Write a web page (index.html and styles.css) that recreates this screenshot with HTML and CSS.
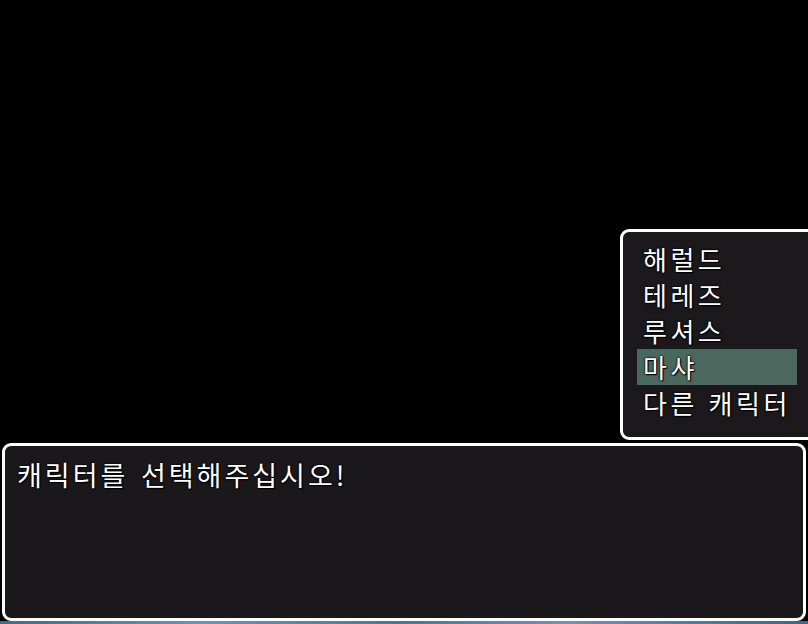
FILE: index.html
```html
<!DOCTYPE html>
<html lang="ko">
<head>
<meta charset="utf-8">
<title>캐릭터 선택</title>
<link rel="stylesheet" href="styles.css">
</head>
<body>
<div class="screen">
  <div class="menu">
    <ul class="choices">
      <li class="choice">해럴드</li>
      <li class="choice">테레즈</li>
      <li class="choice">루셔스</li>
      <li class="choice selected">마샤</li>
      <li class="choice">다른 캐릭터</li>
    </ul>
  </div>
  <div class="dialog">
    <p class="message">캐릭터를 선택해주십시오!</p>
  </div>
  <div class="desktop"></div>
</div>
</body>
</html>
```
FILE: styles.css
```css
html, body {
  margin: 0;
  padding: 0;
  background: #000;
}
.screen {
  width: 808px;
  height: 624px;
  overflow: hidden;
  background: #000;
  display: flex;
  flex-direction: column;
  font-family: "Noto Sans CJK KR", "Noto Sans", sans-serif;
  color: #fff;
}
.menu {
  box-sizing: border-box;
  margin: 229px -20px 0 620px;
  height: 211px;
  border: 3px solid #fff;
  border-radius: 9px;
  background: #1b191c;
  padding: 9px 0 0 14px;
}
.choices {
  list-style: none;
  margin: 0;
  padding: 0;
}
.choice {
  width: 160px;
  box-sizing: border-box;
  height: 36px;
  line-height: 36px;
  padding-left: 6px;
  font-size: 26px;
  letter-spacing: 3.5px;
  white-space: nowrap;
  text-shadow: 0 0 2px #000, 0 0 2px #000, 1px 1px 1px #000;
}
.choice.selected {
  background: #4b685f;
}
.dialog {
  box-sizing: border-box;
  margin: 3px 2px 0 2px;
  height: 178px;
  border: 3px solid #fff;
  border-radius: 9px;
  background: #1a181b;
  padding: 11px 0 0 12px;
}
.message {
  margin: 0;
  font-size: 27px;
  line-height: 36px;
  letter-spacing: 3px;
  word-spacing: 2px;
  white-space: nowrap;
  text-shadow: 0 0 2px #000, 0 0 2px #000, 1px 1px 1px #000;
}
.desktop {
  flex: 1;
  background: linear-gradient(90deg, #3f6a8f 0%, #6f93b0 25%, #4d7598 50%, #7a8faa 70%, #3e658a 100%);
}
```
